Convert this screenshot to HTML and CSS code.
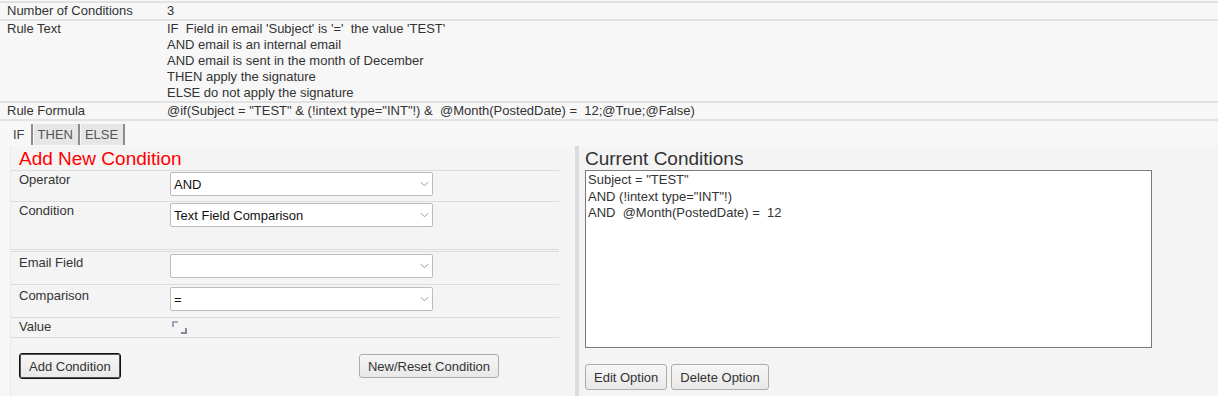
FILE: index.html
```html
<!DOCTYPE html>
<html lang="en">
<head>
  <meta charset="UTF-8">
  <title>Signature Rule</title>
  <link rel="stylesheet" href="styles.css">
</head>
<body>

  <!-- Rule summary -->
  <table class="summary">
    <tr><th>Number of Conditions</th><td>3</td></tr>
    <tr>
      <th>Rule Text</th>
      <td>IF&nbsp; Field in email 'Subject' is '='&nbsp; the value 'TEST'<br>
        AND email is an internal email<br>
        AND email is sent in the month of December<br>
        THEN apply the signature<br>
        ELSE do not apply the signature</td>
    </tr>
    <tr><th>Rule Formula</th><td>@if(Subject = "TEST" &amp; (!intext type="INT"!) &amp;&nbsp; @Month(PostedDate) =&nbsp; 12;@True;@False)</td></tr>
  </table>

  <ul class="tabs">
    <li class="active">IF</li>
    <li>THEN</li>
    <li>ELSE</li>
  </ul>

  <div class="editor">
    <!-- Left: add a condition -->
    <section class="add-panel">
      <h2>Add New Condition</h2>
      <table class="form">
        <tr class="row-op">
          <th>Operator</th>
          <td><div class="select"><select><option>AND</option></select><svg class="chev" viewBox="0 0 10 6"><path d="M1 1l4 4 4-4"/></svg></div></td>
        </tr>
        <tr class="row-cond">
          <th>Condition</th>
          <td><div class="select"><select><option>Text Field Comparison</option></select><svg class="chev" viewBox="0 0 10 6"><path d="M1 1l4 4 4-4"/></svg></div></td>
        </tr>
        <tr class="row-spacer"><th></th><td></td></tr>
        <tr class="row-field">
          <th>Email Field</th>
          <td><div class="select"><select><option></option></select><svg class="chev" viewBox="0 0 10 6"><path d="M1 1l4 4 4-4"/></svg></div></td>
        </tr>
        <tr class="row-field">
          <th>Comparison</th>
          <td><div class="select"><select><option>=</option></select><svg class="chev" viewBox="0 0 10 6"><path d="M1 1l4 4 4-4"/></svg></div></td>
        </tr>
        <tr class="row-value">
          <th>Value</th>
          <td><span class="value-box"></span></td>
        </tr>
      </table>
      <div class="form-buttons">
        <button class="btn focused">Add Condition</button>
        <button class="btn">New/Reset Condition</button>
      </div>
    </section>

    <!-- Right: current conditions -->
    <section class="current-panel">
      <h2>Current Conditions</h2>
      <div class="conditions">Subject = "TEST"<br>AND (!intext type="INT"!)<br>AND&nbsp; @Month(PostedDate) =&nbsp; 12</div>
      <div class="option-buttons">
        <button class="btn">Edit Option</button>
        <button class="btn">Delete Option</button>
      </div>
    </section>
  </div>

</body>
</html>
```

FILE: styles.css
```css
body { margin: 0; background: #f7f7f7; font-family: "Liberation Sans", Arial, sans-serif; font-size: 13px; color: #333; overflow: hidden; }

.summary { width: 100%; margin-top: 1px; border-collapse: collapse; }
.summary tr { border-top: 2px solid #e2e2e2; border-bottom: 2px solid #e2e2e2; }
.summary th, .summary td { padding: 0; line-height: 16px; vertical-align: top; text-align: left; font-weight: normal; }
.summary th { width: 160px; padding-left: 7px; }

.tabs { list-style: none; margin: 3px 0 0 10px; padding: 0; display: flex; height: 22px; }
.tabs li { font-size: 13px; color: #555; line-height: 21px; padding: 0 5px 0 4px; background: #e6e6e6; border-right: 2px solid #8c8c8c; height: 21px; }
.tabs li.active { background: none; color: #444; padding-left: 3px; padding-right: 6px; }
.tabs li + li { margin-left: 1px; }

.editor { display: flex; margin-left: 10px; height: 250px; }

.add-panel { width: 564px; background: #f4f4f4; border-left: 1px solid #e9e9e9; }
.add-panel h2 { margin: 2px 0 0 8px; font-size: 19px; font-weight: normal; color: #f00; line-height: 22px; }

.form { width: 548px; border-collapse: collapse; }
.form tr { border-top: 1px solid #dcdcdc; }
.form th { width: 151px; padding: 1px 0 0 8px; text-align: left; font-weight: normal; font-size: 13px; line-height: 16px; vertical-align: top; }
.form td { padding: 1px 0 0; vertical-align: top; }
.row-op { height: 31px; }
.row-cond { height: 48px; }
.row-spacer { height: 2px; }
.row-spacer th, .row-spacer td { padding: 0; }
.row-field { height: 33px; }
.row-field th { padding-top: 3px; }
.row-field td { padding-top: 2px; }
.row-value { height: 19px; border-bottom: 1px solid #dcdcdc; }
.row-value th { padding-top: 1px; }

.select { position: relative; width: 263px; height: 24px; }
.select select { appearance: none; -webkit-appearance: none; width: 100%; height: 100%; margin: 0; padding: 0 20px 0 3px; background: #fff; border: 1px solid #bdbdbd; border-radius: 2px; font-family: inherit; font-size: 13px; color: #111; }
.chev { position: absolute; right: 4px; top: 9px; width: 9px; height: 6px; fill: none; stroke: #8a8a8a; stroke-width: 1; }

.value-box { display: inline-block; position: relative; width: 15px; height: 13px; margin: 2px 0 0 2px; }
.value-box::before { content: ""; position: absolute; left: 0; top: 0; width: 4px; height: 4px; border-left: 2px solid #a99ab8; border-top: 2px solid #a9a9c0; }
.value-box::after { content: ""; position: absolute; right: 0; bottom: 0; width: 4px; height: 4px; border-right: 2px solid #8a8a9a; border-bottom: 2px solid #8a8a9a; }

.form-buttons { display: flex; justify-content: space-between; align-items: flex-start; width: 480px; margin: 15px 0 0 8px; }

.btn { height: 26px; padding: 0 9px; white-space: nowrap; background: linear-gradient(#f6f6f6, #e8e8e8); border: 1px solid #adadad; border-radius: 3px; font-family: inherit; font-size: 13px; color: #333; }
.btn.focused { border: 1px solid #111; box-shadow: inset 0 0 0 1px #555; }
.form-buttons .btn + .btn { height: 24px; margin-top: 1px; padding: 0 8px; }

.current-panel { flex: 1; background: #f4f4f4; border-left: 4px solid #dcdcdc; padding-left: 6px; }
.current-panel h2 { margin: 2px 0 0; font-size: 19px; font-weight: normal; color: #333; line-height: 22px; }
.conditions { width: 561px; height: 174px; padding: 1px 2px; background: #fff; border: 1px solid #7a7a7a; font-size: 13px; line-height: 16.5px; color: #333; }
.option-buttons { display: flex; gap: 4px; margin-top: 16px; }
.option-buttons .btn { height: 26px; padding: 0 8px; }
```
